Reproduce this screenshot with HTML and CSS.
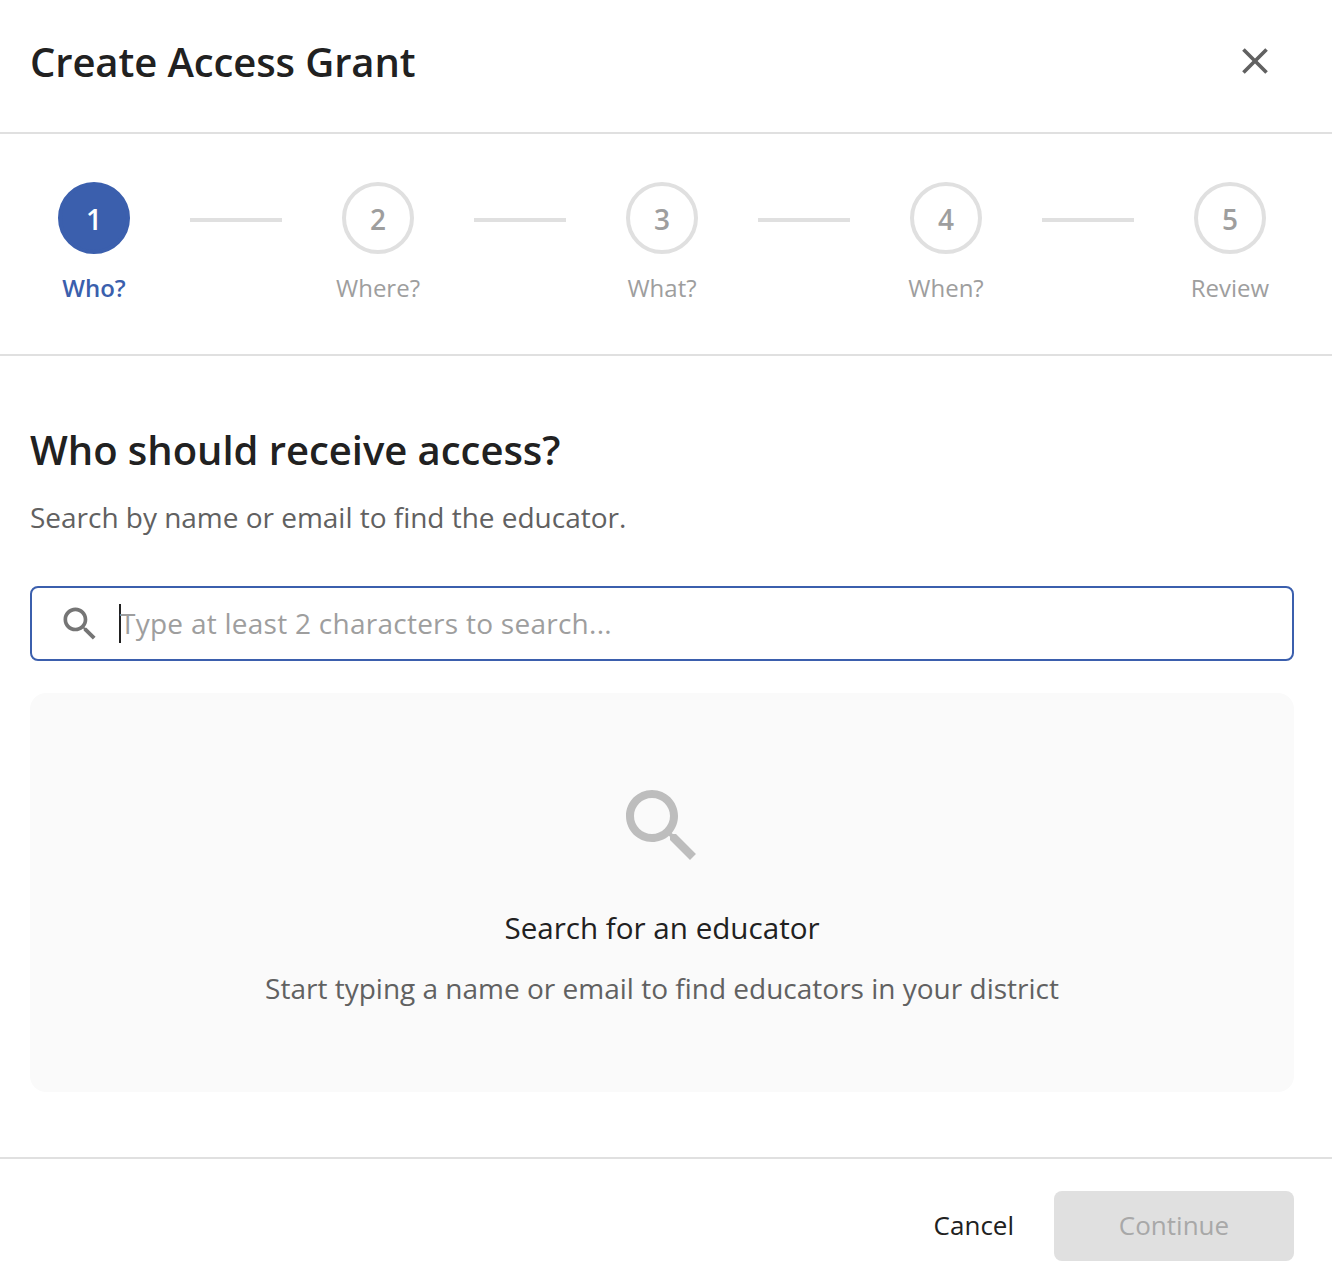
FILE: index.html
```html
<!DOCTYPE html>
<html lang="en">
<head>
<meta charset="utf-8">
<title>Create Access Grant</title>
<link rel="stylesheet" href="styles.css">
</head>
<body>
<div class="dialog">
  <header class="header">
    <h1 class="title">Create Access Grant</h1>
    <svg class="close" viewBox="0 0 24 24"><path d="M19 6.41L17.59 5 12 10.59 6.41 5 5 6.41 10.59 12 5 17.59 6.41 19 12 13.41 17.59 19 19 17.59 13.41 12z"/></svg>
  </header>
  <nav class="stepper">
    <div class="step active"><div class="circle">1</div><div class="label">Who?</div></div>
    <div class="connector"></div>
    <div class="step"><div class="circle">2</div><div class="label">Where?</div></div>
    <div class="connector"></div>
    <div class="step"><div class="circle">3</div><div class="label">What?</div></div>
    <div class="connector"></div>
    <div class="step"><div class="circle">4</div><div class="label">When?</div></div>
    <div class="connector"></div>
    <div class="step"><div class="circle">5</div><div class="label">Review</div></div>
  </nav>
  <main class="content">
    <h2 class="heading">Who should receive access?</h2>
    <p class="sub">Search by name or email to find the educator.</p>
    <div class="search">
      <svg class="search-icon" viewBox="0 0 24 24"><path d="M15.5 14h-.79l-.28-.27C15.41 12.59 16 11.11 16 9.5 16 5.91 13.09 3 9.5 3S3 5.91 3 9.5 5.91 16 9.5 16c1.61 0 3.09-.59 4.23-1.57l.27.28v.79l5 4.99L20.49 19l-4.99-5zm-6 0C7.01 14 5 11.99 5 9.5S7.01 5 9.5 5 14 7.01 14 9.5 11.99 14 9.5 14z"/></svg>
      <span class="caret"></span>
      <span class="placeholder">Type at least 2 characters to search...</span>
    </div>
    <section class="empty">
      <svg class="empty-icon" viewBox="0 0 24 24"><path d="M15.5 14h-.79l-.28-.27C15.41 12.59 16 11.11 16 9.5 16 5.91 13.09 3 9.5 3S3 5.91 3 9.5 5.91 16 9.5 16c1.61 0 3.09-.59 4.23-1.57l.27.28v.79l5 4.99L20.49 19l-4.99-5zm-6 0C7.01 14 5 11.99 5 9.5S7.01 5 9.5 5 14 7.01 14 9.5 11.99 14 9.5 14z"/></svg>
      <h3 class="empty-title">Search for an educator</h3>
      <p class="empty-text">Start typing a name or email to find educators in your district</p>
    </section>
  </main>
  <footer class="footer">
    <span class="cancel">Cancel</span>
    <span class="continue">Continue</span>
  </footer>
</div>
</body>
</html>
```
FILE: styles.css
```css
* { box-sizing: border-box; }
html, body { margin: 0; padding: 0; background: #fff; }
body { font-family: "Open Sans", sans-serif; color: #212121; }
.dialog { width: 1332px; height: 1284px; display: flex; flex-direction: column; }

.header { height: 134px; border-bottom: 2px solid #e0e0e0; display: flex; align-items: center; justify-content: space-between; padding: 0 55px 8px 30px; flex: none; }
.title { margin: 0; font-size: 40px; font-weight: 600; line-height: 54px; letter-spacing: -0.1px; }
.close { width: 44px; height: 44px; fill: #616161; display: block; margin-bottom: 2px; }

.stepper { height: 222px; border-bottom: 2px solid #e0e0e0; display: flex; align-items: flex-start; padding: 48px 38px 0 30px; flex: none; }
.step { width: 128px; display: flex; flex-direction: column; align-items: center; flex: none; }
.circle { width: 72px; height: 72px; border-radius: 50%; border: 4px solid #e0e0e0; color: #9e9e9e; display: flex; align-items: center; justify-content: center; font-size: 28px; font-weight: 600; padding-top: 1px; }
.label { margin-top: 18px; font-size: 24px; line-height: 32px; color: #9e9e9e; white-space: nowrap; }
.step.active .circle { background: #3b5fad; border-color: #3b5fad; color: #fff; }
.step.active .label { color: #3b5fad; font-weight: 600; }
.connector { width: 92px; height: 4px; background: #e0e0e0; margin: 36px 32px 0; flex: none; }

.content { flex: 1; padding: 64px 38px 0 30px; }
.heading { margin: 0; font-size: 40px; font-weight: 600; line-height: 60px; letter-spacing: -0.04px; }
.sub { margin: 17px 0 0; font-size: 28px; line-height: 40px; color: #616161; letter-spacing: -0.02px; }
.search { height: 75px; margin-top: 49px; border: 2px solid #3b5fad; border-radius: 8px; display: flex; align-items: center; padding-left: 26px; }
.search-icon { width: 44px; height: 44px; fill: #757575; flex: none; margin-right: 17px; }
.caret { width: 2px; height: 39px; background: #212121; flex: none; margin-right: -1px; }
.placeholder { font-size: 28px; line-height: 38px; margin-bottom: 1px; color: #9e9e9e; letter-spacing: 0.26px; }
.empty { height: 399px; margin-top: 32px; background: #fafafa; border-radius: 16px; display: flex; flex-direction: column; align-items: center; padding-top: 85px; }
.empty-icon { width: 96px; height: 96px; fill: #bdbdbd; display: block; }
.empty-title { margin: 34px 0 0; font-size: 29.6px; font-weight: 400; line-height: 40px; }
.empty-text { margin: 20px 0 0; font-size: 28px; line-height: 40px; color: #616161; }

.footer { height: 127px; border-top: 2px solid #e0e0e0; display: flex; align-items: flex-start; justify-content: flex-end; padding: 32px 38px 0 0; flex: none; }
.cancel { font-size: 26px; line-height: 68px; margin-right: 40px; }
.continue { width: 240px; height: 70px; border-radius: 8px; background: #e0e0e0; color: #a8a8a8; font-size: 26px; line-height: 68px; text-align: center; }
```
